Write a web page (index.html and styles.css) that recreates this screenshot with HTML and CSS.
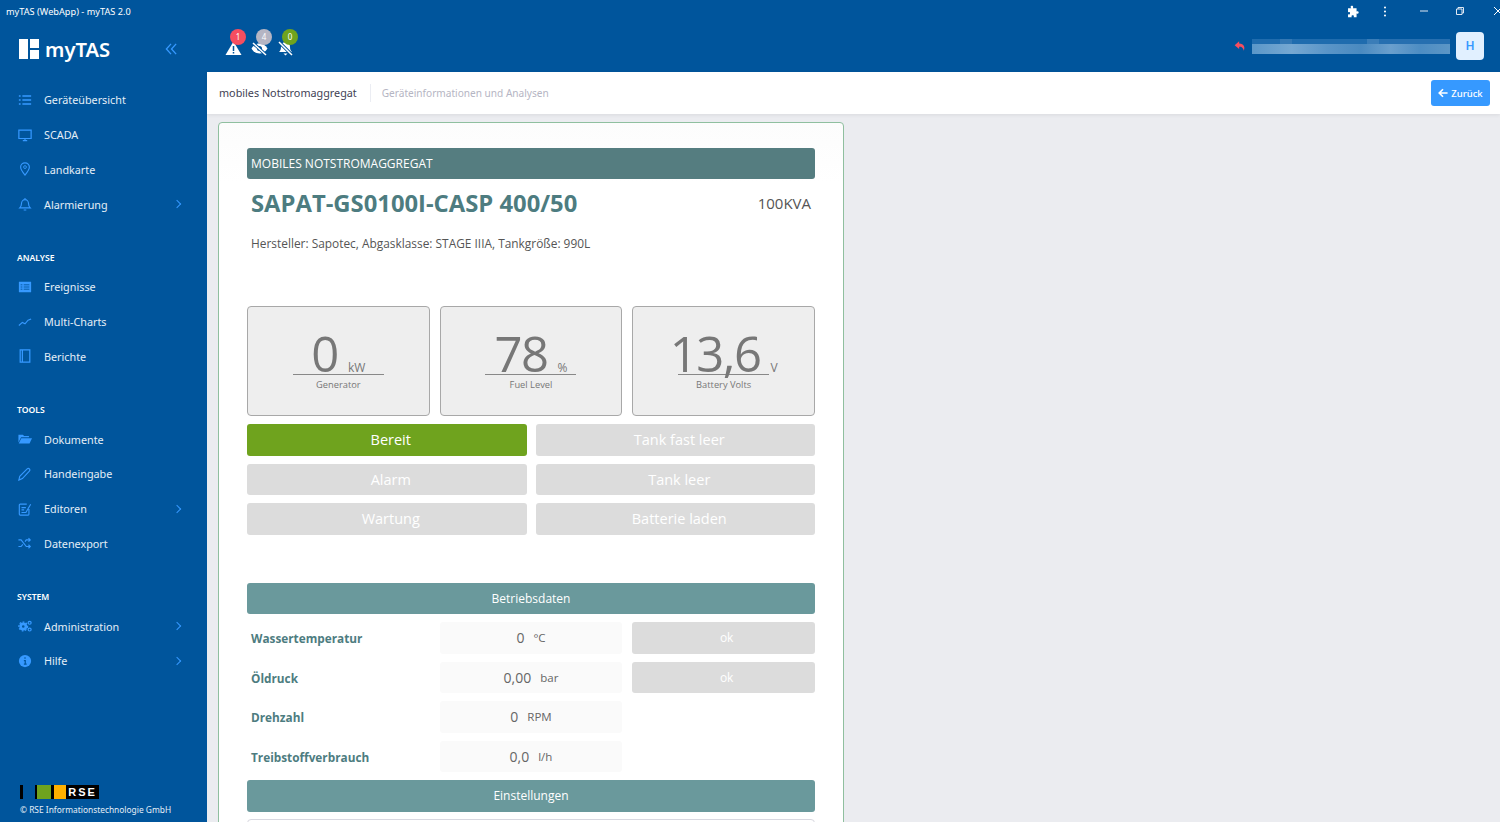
FILE: index.html
```html
<!DOCTYPE html>
<html lang="de">
<head>
    <meta charset="UTF-8">
    <title>myTAS</title>
    <link rel="stylesheet" href="styles.css">
</head>
<body>
    <div class="titlebar">
        <span class="titlebar-text">myTAS (WebApp) - myTAS 2.0</span>
        <div class="window-controls">
            <svg class="win-puzzle" viewBox="0 0 16 16"><path fill="#fff" d="M6 1.500c1.400-1 3-.2 2.800 1.200L8.600 4H13v4l1.200-.3c1.500-.2 2 2.800.3 3l-1.500-.2V15H9.500l.2-1.300c.2-1.500-3-1.500-2.900 0l.2 1.300H2.500v-3.500l1.200.2c1.600.2 1.700-3.200 0-3l-1.200.2V4h4l-.6-.8C5.600 2.700 5.500 2 6 1.500z"/></svg>
            <svg class="win-dots" viewBox="0 0 4 14"><circle cx="2" cy="2" r="1.300" fill="#fff"/><circle cx="2" cy="7" r="1.300" fill="#fff"/><circle cx="2" cy="12" r="1.300" fill="#fff"/></svg>
            <svg class="win-min" viewBox="0 0 10 10"><path d="M1 5h8" stroke="#dfe8f2" fill="none"/></svg>
            <svg class="win-restore" viewBox="0 0 10 10"><path d="M1.500 3h5.500v5.500H1.500zM3 3V1.500h5.500V7H7" stroke="#dfe8f2" fill="none"/></svg>
            <svg class="win-close" viewBox="0 0 10 10"><path d="M1 1l8 8M9 1l-8 8" stroke="#fff" fill="none"/></svg>
        </div>
    </div>

    <div class="app">
        <aside class="sidebar">
            <div class="brand">
                <div class="brand-logo">
                    <svg viewBox="0 0 20 20" width="20" height="20"><path fill="#fff" d="M0 0h9v20H0zM11 0h9v9h-9zM11 11h9v9h-9z"/></svg>
                    <span>myTAS</span>
                </div>
                <svg class="collapse" viewBox="0 0 14 14"><path d="M6.500 1.500L1.500 7l5 5.500M12 1.500L7 7l5 5.500" fill="none" stroke="#3699ff" stroke-width="1.400"/></svg>
            </div>

            <nav class="menu">
                <a class="menu-item"><svg viewBox="0 0 16 16"><path d="M5 3.500h10M5 8h10M5 12.500h10M1 3.500h2M1 8h2M1 12.500h2" stroke="#3699ff" stroke-width="1.600" fill="none"/></svg><span>Geräteübersicht</span></a>
                <a class="menu-item"><svg viewBox="0 0 16 16"><path d="M1 2.500h14v9.500H1zM5.500 14.500h5M8 12v2.500" stroke="#3699ff" stroke-width="1.400" fill="none"/></svg><span>SCADA</span></a>
                <a class="menu-item"><svg viewBox="0 0 16 16"><path d="M8 1c-3 0-5 2.200-5 4.800C3 9 8 15 8 15s5-6 5-9.200C13 3.200 11 1 8 1z" stroke="#3699ff" stroke-width="1.300" fill="none"/><circle cx="8" cy="5.800" r="1.600" stroke="#3699ff" fill="none"/></svg><span>Landkarte</span></a>
                <a class="menu-item has-sub"><svg viewBox="0 0 16 16"><path d="M2 12.500c1.500-1.500 2-3 2-5C4 5 5.800 3 8 3s4 2 4 4.500c0 2 .5 3.500 2 5zM6.500 14.800h3M8 1v2" stroke="#3699ff" stroke-width="1.300" fill="none"/></svg><span>Alarmierung</span></a>

                <div class="menu-section">ANALYSE</div>
                <a class="menu-item"><svg viewBox="0 0 16 16"><path fill="#3699ff" d="M1 2h14v12H1z"/><path d="M3 5.500h2M3 8h2M3 10.500h2M6.500 5.500h6.500M6.500 8h6.500M6.500 10.500h6.500" stroke="#00559c" fill="none"/></svg><span>Ereignisse</span></a>
                <a class="menu-item"><svg viewBox="0 0 16 16"><path d="M1 12l4-3.500 3 1.500 3.500-4 3.500-1.500" stroke="#3699ff" stroke-width="1.300" fill="none"/></svg><span>Multi-Charts</span></a>
                <a class="menu-item"><svg viewBox="0 0 16 16"><path d="M2.500 1h11v14h-11zM5 1v14" stroke="#3699ff" stroke-width="1.400" fill="none"/></svg><span>Berichte</span></a>

                <div class="menu-section">TOOLS</div>
                <a class="menu-item"><svg viewBox="0 0 16 16"><path fill="#3699ff" d="M.5 3h5l1.500 1.500h5.500V6H3.500L.5 12zM3.800 7H16l-2.800 6H.8z"/></svg><span>Dokumente</span></a>
                <a class="menu-item"><svg viewBox="0 0 16 16"><path d="M1 15l1-4.300 8.500-8.500c.8-.8 1.800-.8 2.500 0s.8 1.700 0 2.500L5 13.200z" stroke="#3699ff" stroke-width="1.300" fill="none"/></svg><span>Handeingabe</span></a>
                <a class="menu-item has-sub"><svg viewBox="0 0 16 16"><path d="M12.500 8v6a1 1 0 0 1-1 1h-9a1 1 0 0 1-1-1V3.500a1 1 0 0 1 1-1H10M4 6.500h5M4 9h3M4 12h5l5.500-9.500" stroke="#3699ff" stroke-width="1.300" fill="none"/></svg><span>Editoren</span></a>
                <a class="menu-item"><svg viewBox="0 0 16 16"><path d="M.5 4.500h3l6 7.500h4M.5 12h3l2-2.500M8 6.500l1.500-2h4M12 2.500l2 2-2 2M12 10l2 2-2 2" stroke="#3699ff" stroke-width="1.300" fill="none"/></svg><span>Datenexport</span></a>

                <div class="menu-section">SYSTEM</div>
                <a class="menu-item has-sub"><svg viewBox="0 0 16 16"><circle cx="6" cy="8.500" r="3" fill="none" stroke="#3699ff" stroke-width="3"/><circle cx="6" cy="8.500" r="5" fill="none" stroke="#3699ff" stroke-width="1.400" stroke-dasharray="2 1.700"/><circle cx="13.300" cy="4.300" r="1.700" fill="none" stroke="#3699ff" stroke-width="1.400"/><circle cx="13.300" cy="12" r="1.700" fill="none" stroke="#3699ff" stroke-width="1.400"/></svg><span>Administration</span></a>
                <a class="menu-item has-sub"><svg viewBox="0 0 16 16"><circle cx="8" cy="8" r="7" fill="#3699ff"/><path d="M8 3.800v1.700M6.700 7.500H8.300V11.500M6.700 11.500h3.200" stroke="#00559c" stroke-width="1.400" fill="none"/></svg><span>Hilfe</span></a>
            </nav>

            <div class="sidebar-footer">
                <div class="rse-logo">
                    <i class="rse-bar"></i>
                    <i class="rse-gap"></i>
                    <i class="rse-green"></i>
                    <i class="rse-orange"></i>
                    <b>RSE</b>
                </div>
                <div class="copyright">© RSE Informationstechnologie GmbH</div>
            </div>
        </aside>

        <div class="main">
            <header class="topbar">
                <div class="alerts">
                    <div class="alert-icon">
                        <svg viewBox="0 0 16 16"><path fill="#fff" d="M8 1.500L16 15H0z"/><path d="M8 6v5M8 12v1.500" stroke="#00559c" stroke-width="1.500"/></svg>
                        <span class="badge badge-red">1</span>
                    </div>
                    <div class="alert-icon">
                        <svg viewBox="0 0 16 16"><path fill="#fff" d="M0 8.500C2 5 5 3.500 8 3.500s6 1.500 8 5c-2 3.500-5 5-8 5s-6-1.500-8-5z"/><circle cx="8" cy="8.500" r="2.500" fill="#00559c"/><path d="M1.500 3l13 12" stroke="#00559c" stroke-width="3.200"/><path d="M1.500 3l13 12" stroke="#fff" stroke-width="1.500"/></svg>
                        <span class="badge badge-grey">4</span>
                    </div>
                    <div class="alert-icon">
                        <svg viewBox="0 0 16 16"><path fill="#fff" d="M8 2c-3 0-4.500 2.200-4.500 5 0 3-1 4-2 5h13c-1-1-2-2-2-5 0-2.800-1.500-5-4.500-5zM6 13.500h4L8 15.500z"/><path d="M1.500 2l13 13" stroke="#00559c" stroke-width="3.200"/><path d="M1.500 2l13 13" stroke="#fff" stroke-width="1.500"/></svg>
                        <span class="badge badge-green">0</span>
                    </div>
                </div>
                <div class="user">
                    <svg class="reply" viewBox="0 0 14 14"><path fill="#f64e60" d="M6 1.500L.8 6 6 10.500V7.800c2.500 0 4.500.5 5.500 4.700 1.500-4 .5-7.800-5.500-8.300z"/></svg>
                    <div class="user-blur"></div>
                    <div class="avatar">H</div>
                </div>
            </header>

            <div class="subheader">
                <div class="crumbs">
                    <span class="crumb-title">mobiles Notstromaggregat</span>
                    <span class="crumb-desc">Geräteinformationen und Analysen</span>
                </div>
                <button class="back-btn">
                    <svg viewBox="0 0 12 12"><path d="M6 1.500L1.500 6 6 10.500M2 6h9.500" stroke="#fff" stroke-width="2" fill="none"/></svg>
                    Zurück
                </button>
            </div>

            <div class="content">
                <section class="card">
                    <div class="card-head">MOBILES NOTSTROMAGGREGAT</div>
                    <div class="model-row">
                        <h1>SAPAT-GS0100I-CASP 400/50</h1>
                        <span class="power">100KVA</span>
                    </div>
                    <p class="maker">Hersteller: Sapotec, Abgasklasse: STAGE IIIA, Tankgröße: 990L</p>

                    <!-- Kennzahlen -->
                    <div class="stats">
                        <div class="stat">
                            <div class="stat-value"><span class="num">0</span><span class="unit">kW</span></div>
                            <div class="stat-label">Generator</div>
                        </div>
                        <div class="stat">
                            <div class="stat-value"><span class="num">78</span><span class="unit">%</span></div>
                            <div class="stat-label">Fuel Level</div>
                        </div>
                        <div class="stat">
                            <div class="stat-value"><span class="num">13,6</span><span class="unit">V</span></div>
                            <div class="stat-label">Battery Volts</div>
                        </div>
                    </div>

                    <!-- Status -->
                    <div class="states">
                        <div class="state state-on">Bereit</div>
                        <div class="state">Tank fast leer</div>
                        <div class="state">Alarm</div>
                        <div class="state">Tank leer</div>
                        <div class="state">Wartung</div>
                        <div class="state">Batterie laden</div>
                    </div>

                    <div class="section-bar section-first">Betriebsdaten</div>
                    <div class="data-rows">
                        <div class="data-label">Wassertemperatur</div>
                        <div class="data-value"><span>0</span><small>°C</small></div>
                        <div class="data-ok">ok</div>

                        <div class="data-label">Öldruck</div>
                        <div class="data-value"><span>0,00</span><small>bar</small></div>
                        <div class="data-ok">ok</div>

                        <div class="data-label">Drehzahl</div>
                        <div class="data-value"><span>0</span><small>RPM</small></div>
                        <div></div>

                        <div class="data-label">Treibstoffverbrauch</div>
                        <div class="data-value"><span>0,0</span><small>l/h</small></div>
                        <div></div>
                    </div>
                    <div class="section-bar">Einstellungen</div>
                    <div class="settings-box"></div>
                </section>
            </div>
        </div>
    </div>
</body>
</html>
```

FILE: styles.css
```css
* {
    box-sizing: border-box;
}

html, body {
    height: 822px;
    margin: 0;
    overflow: hidden;
}

body {
    display: flex;
    flex-direction: column;
    font-family: "Noto Sans", "Open Sans", sans-serif;
    background: #00559c;
    color: #3f4254;
}

/* Title bar */
.titlebar {
    flex: 0 0 22px;
    display: flex;
    justify-content: space-between;
    align-items: center;
    padding-left: 6px;
    color: #fff;
    font-size: 9.2px;
    overflow: hidden;
}

.window-controls {
    display: flex;
    align-items: center;
}

.win-puzzle {
    width: 13px;
    height: 13px;
}

.win-dots {
    width: 4px;
    height: 11px;
    margin-left: 24px;
}

.win-min,
.win-restore {
    width: 10px;
    height: 10px;
}

.win-min {
    margin-left: 32px;
}

.win-restore {
    margin-left: 26px;
}

.win-close {
    width: 10px;
    height: 10px;
    margin: 0 -3px 0 28px;
}

.app {
    flex: 1;
    display: flex;
    min-height: 0;
}

/* Sidebar */
.sidebar {
    flex: 0 0 207px;
    display: flex;
    flex-direction: column;
    background: #00559c;
}

.brand {
    display: flex;
    justify-content: space-between;
    align-items: center;
    height: 49px;
    padding: 5px 29px 0 19px;
    margin-bottom: 11.5px;
}

.brand-logo {
    display: flex;
    align-items: center;
    gap: 6px;
    color: #fff;
    font-size: 20.2px;
    font-weight: 600;
}

.collapse {
    width: 13px;
    height: 14px;
}

.menu {
    flex: 1;
}

.menu-item {
    display: flex;
    align-items: center;
    height: 34.75px;
    padding: 0 16px 0 18px;
    color: #e4eef7;
    font-size: 10.8px;
    position: relative;
}

.menu-item svg {
    flex: 0 0 14px;
    width: 14px;
    height: 14px;
    margin-right: 12px;
}

.menu-item.has-sub::after {
    content: '';
    margin-left: auto;
    width: 5px;
    height: 5px;
    margin-right: 11px;
    border-top: 1px solid #3699ff;
    border-right: 1px solid #3699ff;
    transform: rotate(45deg);
}

.menu-section {
    height: 17px;
    line-height: 20px;
    margin: 26px 0 5px;
    padding-left: 17px;
    color: #fff;
    font-size: 8.6px;
    font-weight: 600;
}

.sidebar-footer {
    padding: 0 0 6px 20px;
}

.rse-logo {
    display: flex;
    align-items: stretch;
    height: 14px;
    margin-bottom: 5px;
}

.rse-bar {
    width: 3px;
    background: #000;
}

.rse-gap {
    width: 12px;
}

.rse-green {
    width: 16px;
    background: #6fa31e;
    border-left: 2px solid #000;
}

.rse-orange {
    width: 15px;
    background: #ffb100;
    border-left: 3px solid #000;
}

.rse-logo b {
    width: 33px;
    background: #000;
    color: #fff;
    font-family: "Liberation Sans", sans-serif;
    font-size: 11px;
    line-height: 14px;
    letter-spacing: 2px;
    text-align: center;
}

.copyright {
    color: #e4eef7;
    font-size: 8.4px;
    line-height: 12px;
    white-space: nowrap;
}

/* Main column */
.main {
    flex: 1;
    display: flex;
    flex-direction: column;
    min-width: 0;
}

.topbar {
    flex: 0 0 50px;
    display: flex;
    justify-content: space-between;
    align-items: center;
    padding: 0 16px 2px 18px;
}

.alerts {
    display: flex;
    gap: 9px;
    margin-top: 4px;
}

.alert-icon {
    position: relative;
    width: 17px;
    height: 16px;
}

.alert-icon svg {
    display: block;
    width: 17px;
    height: 16px;
}

.badge {
    position: absolute;
    top: -11px;
    left: 5px;
    width: 16px;
    height: 16px;
    border-radius: 50%;
    color: #fff;
    font-size: 8px;
    line-height: 16px;
    text-align: center;
}

.badge-red {
    background: #f64e60;
}

.badge-grey {
    background: #b5b5c3;
}

.badge-green {
    background: #6fa31e;
}

.user {
    display: flex;
    align-items: center;
}

.reply {
    width: 12px;
    height: 12px;
    margin-right: 6px;
}

.user-blur {
    width: 198px;
    height: 15px;
    margin-right: 6px;
    background:
        linear-gradient(90deg, #1f6cae 0 14%, #3478b4 14% 20%, #1f6cae 20% 58%, #3a7db8 58% 64%, #266fb0 64% 100%) top / 100% 5px no-repeat,
        linear-gradient(90deg, #5a97c9 0, #76a8d2 20%, #5a95c8 38%, #4a8ac0 55%, #6a9fcd 70%, #4d8dc3 85%, #5c96c6 100%);
}

.avatar {
    width: 28px;
    height: 28px;
    border-radius: 4px;
    background: #e1f0ff;
    color: #3699ff;
    font-size: 12px;
    font-weight: 600;
    line-height: 28px;
    text-align: center;
}

.subheader {
    flex: 0 0 42px;
    display: flex;
    justify-content: space-between;
    align-items: center;
    padding: 0 10px 0 12px;
    background: #fff;
    box-shadow: 0 1px 4px rgba(0,0,0,0.08);
    position: relative;
}

.crumbs {
    display: flex;
    align-items: center;
}

.crumb-title {
    padding-right: 13px;
    border-right: 1px solid #ebedf3;
    color: #3f4254;
    font-size: 10.8px;
    line-height: 18px;
}

.crumb-desc {
    padding-left: 11px;
    color: #b5b5c3;
    font-size: 10.1px;
}

.back-btn {
    display: flex;
    align-items: center;
    justify-content: center;
    gap: 3px;
    width: 59px;
    height: 26px;
    padding: 0;
    background: #3699ff;
    border: none;
    border-radius: 3px;
    color: #fff;
    font-family: inherit;
    font-size: 9.5px;
    font-weight: 500;
}

.back-btn svg {
    width: 10px;
    height: 10px;
}

.content {
    flex: 1;
    min-height: 0;
    padding: 8px 0 0 11px;
    background: #ebecf0;
    font-family: "Open Sans", "Noto Sans", sans-serif;
    overflow: hidden;
}

/* Card */
.card {
    width: 626px;
    height: 720px;
    padding: 25px 28px 0;
    background: linear-gradient(#fcfcfc, #fff 60px);
    border: 1px solid #8fbf9f;
    border-radius: 4px;
}

.card-head {
    height: 31px;
    padding-left: 4px;
    background: #557d80;
    border-radius: 3px;
    color: #fff;
    font-size: 12px;
    line-height: 32px;
}

.model-row {
    display: flex;
    justify-content: space-between;
    align-items: center;
    height: 48px;
    padding: 0 4px;
}

h1 {
    margin: 0;
    color: #4d7c80;
    font-size: 23.8px;
    font-weight: 700;
}

.power {
    color: #555;
    font-size: 15px;
}

.maker {
    margin: 6px 0 0 4px;
    color: #555;
    font-size: 11.9px;
    line-height: 20px;
}

.stats {
    display: grid;
    grid-template-columns: repeat(3, 1fr);
    gap: 10px;
    margin-top: 53px;
}

.stat {
    display: flex;
    flex-direction: column;
    align-items: center;
    height: 110px;
    padding-top: 20px;
    background: #eee;
    border: 1px solid #a8a8a8;
    border-radius: 4px;
    color: #777;
}

.stat-value {
    display: flex;
    justify-content: center;
    align-items: baseline;
    width: 91px;
    height: 48px;
    border-bottom: 1px solid #888;
    white-space: nowrap;
}

.num {
    flex: none;
    font-size: 49px;
    letter-spacing: -1.5px;
    line-height: 52px;
}

.unit {
    flex: none;
    margin-left: 10px;
    font-size: 12px;
}

.stat-label {
    margin-top: 3px;
    font-size: 9.3px;
}

.states {
    display: grid;
    grid-template-columns: 1fr 1fr;
    gap: 8px 9px;
    margin-top: 8px;
}

.state {
    height: 31.5px;
    padding-left: 8px;
    background: #dcdcdc;
    border-radius: 3px;
    color: #fff;
    font-size: 14.5px;
    line-height: 31px;
    text-align: center;
}

.state-on {
    background: #6fa31e;
}

.section-bar {
    height: 31.5px;
    background: #6a999c;
    border-radius: 3px;
    color: #fff;
    font-size: 12px;
    line-height: 32px;
    text-align: center;
}

.section-first {
    margin-top: 48px;
}

.data-rows {
    display: grid;
    grid-template-columns: repeat(3, 1fr);
    gap: 8px 10px;
    margin: 8px 0;
}

.data-label {
    height: 31.5px;
    padding-left: 4px;
    color: #4d7c80;
    font-size: 11.8px;
    font-weight: 700;
    line-height: 32px;
}

.data-value {
    display: flex;
    justify-content: center;
    align-items: center;
    gap: 9px;
    height: 31.5px;
    background: #fafafa;
    border-radius: 3px;
    color: #666;
    font-size: 14px;
}

.data-value small {
    font-size: 11.5px;
}

.data-ok {
    height: 31.5px;
    padding-left: 6px;
    background: #dcdcdc;
    border-radius: 3px;
    color: #fff;
    font-size: 12px;
    line-height: 32px;
    text-align: center;
}

.settings-box {
    height: 60px;
    margin-top: 7px;
    border: 1px solid #d8d8e0;
    border-radius: 4px;
}
```
